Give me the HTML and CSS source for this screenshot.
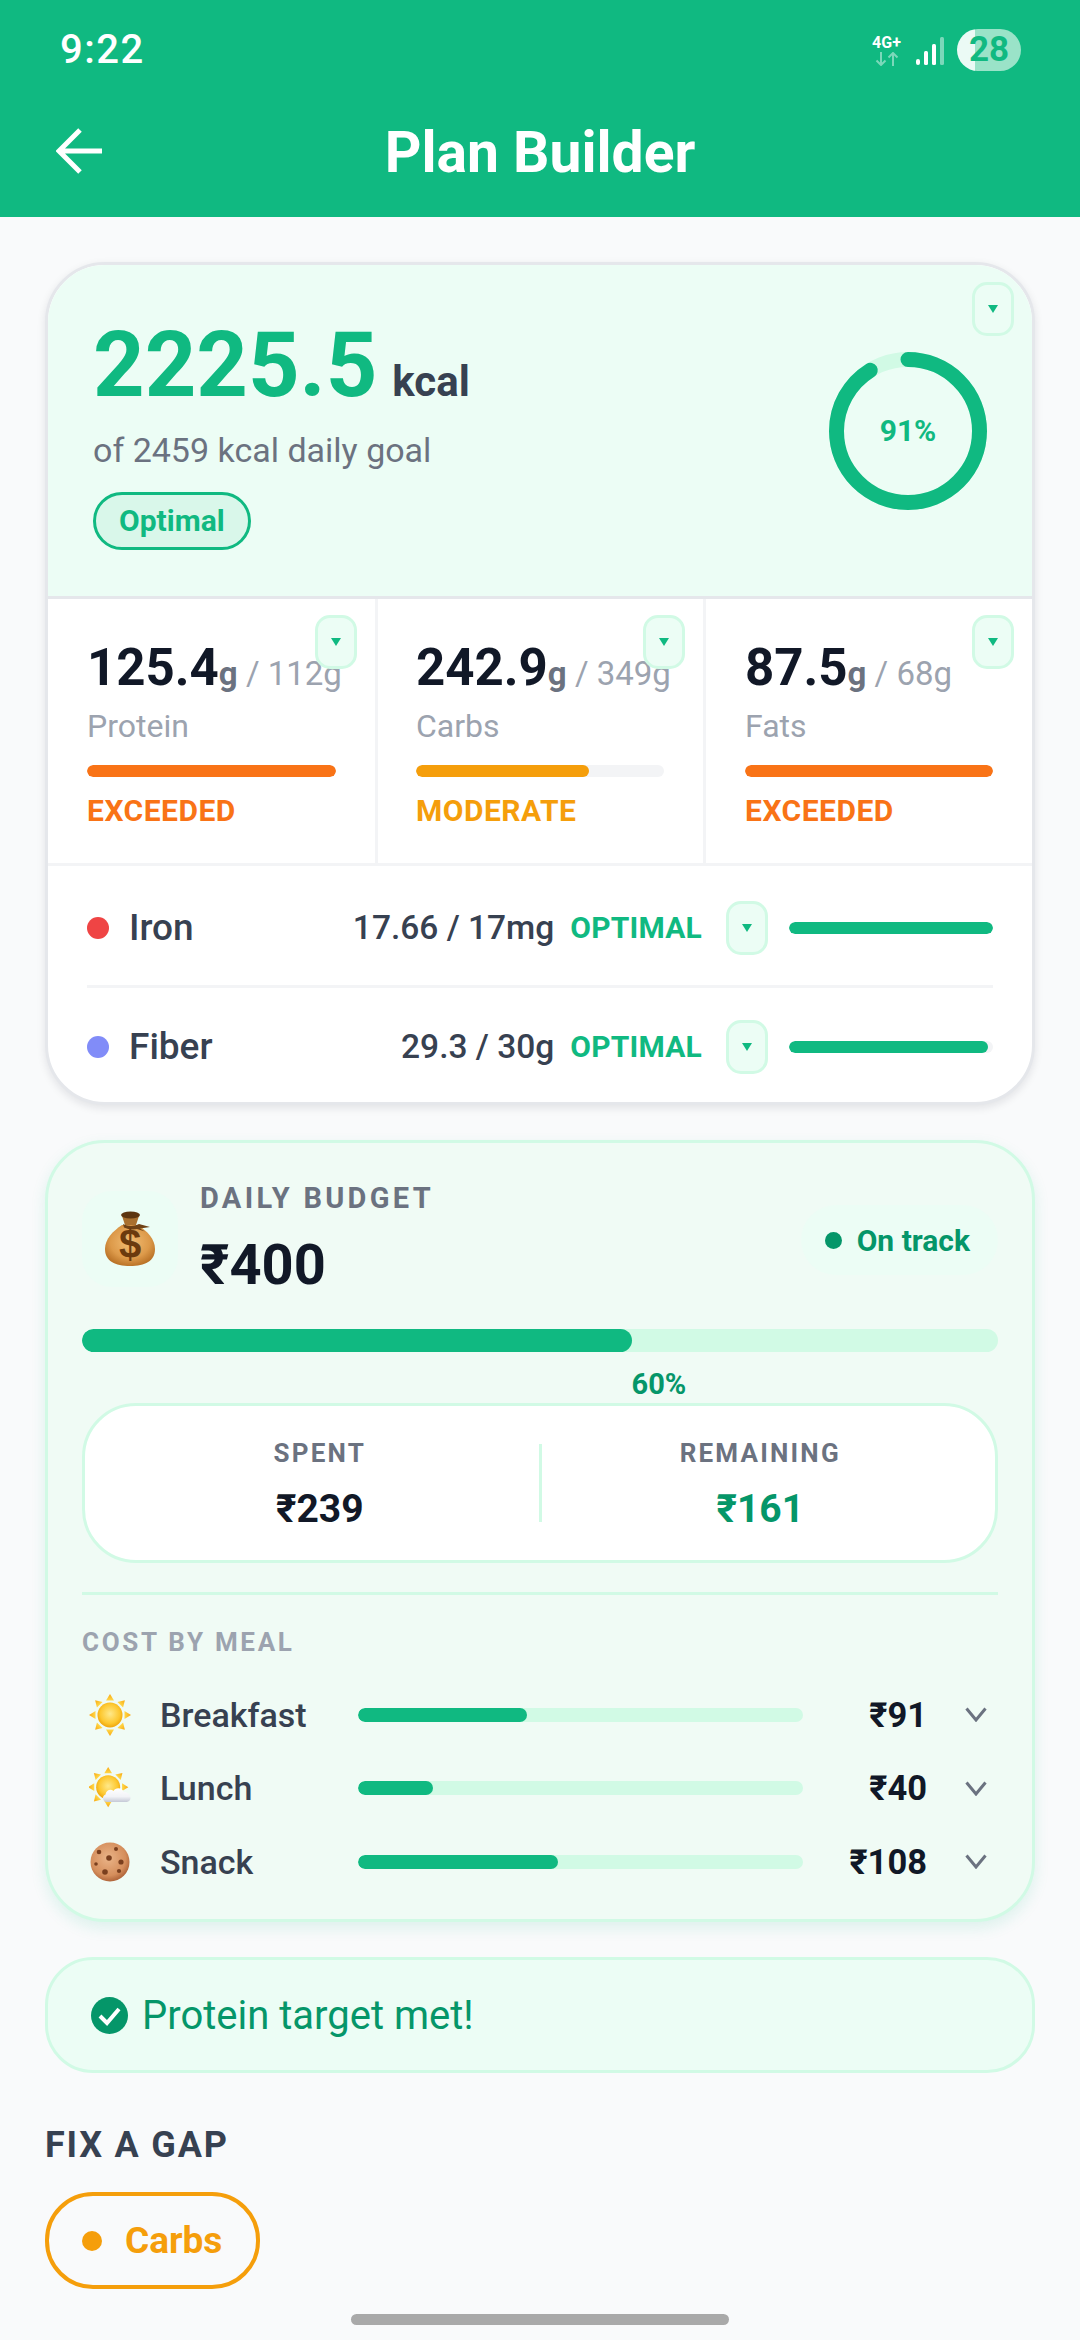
FILE: index.html
```html
<!DOCTYPE html>
<html lang="en">
<head>
<meta charset="utf-8">
<title>Plan Builder</title>
<link rel="stylesheet" href="styles.css">
</head>
<body>
<svg class="defs" width="0" height="0" aria-hidden="true">
  <defs>
    <radialGradient id="sunG" cx="50%" cy="45%" r="55%"><stop offset="0%" stop-color="#ffe98a"/><stop offset="70%" stop-color="#fdc830"/><stop offset="100%" stop-color="#eea50c"/></radialGradient>
    <linearGradient id="rayG" x1="0" y1="0" x2="0" y2="1"><stop offset="0%" stop-color="#f9a80f"/><stop offset="100%" stop-color="#ffd84a"/></linearGradient>
    <radialGradient id="bagG" cx="50%" cy="42%" r="60%"><stop offset="0%" stop-color="#f2bd74"/><stop offset="65%" stop-color="#dd9a4a"/><stop offset="100%" stop-color="#b87025"/></radialGradient>
    <radialGradient id="cookieG" cx="45%" cy="40%" r="60%"><stop offset="0%" stop-color="#eab488"/><stop offset="75%" stop-color="#d58e5c"/><stop offset="100%" stop-color="#b0653a"/></radialGradient>
    <linearGradient id="cloudG" x1="0" y1="0" x2="0" y2="1"><stop offset="0%" stop-color="#ffffff"/><stop offset="60%" stop-color="#f2f3f7"/><stop offset="100%" stop-color="#c5c9d6"/></linearGradient>
    <g id="rays">
      <polygon points="21,0 25,6.5 17,6.5" fill="url(#rayG)"/>
      <polygon points="21,0 25,6.5 17,6.5" fill="url(#rayG)" transform="rotate(45 21 21)"/>
      <polygon points="21,0 25,6.5 17,6.5" fill="url(#rayG)" transform="rotate(90 21 21)"/>
      <polygon points="21,0 25,6.5 17,6.5" fill="url(#rayG)" transform="rotate(135 21 21)"/>
      <polygon points="21,0 25,6.5 17,6.5" fill="url(#rayG)" transform="rotate(180 21 21)"/>
      <polygon points="21,0 25,6.5 17,6.5" fill="url(#rayG)" transform="rotate(225 21 21)"/>
      <polygon points="21,0 25,6.5 17,6.5" fill="url(#rayG)" transform="rotate(270 21 21)"/>
      <polygon points="21,0 25,6.5 17,6.5" fill="url(#rayG)" transform="rotate(315 21 21)"/>
    </g>
    <polygon id="tri" points="0,0 10,0 5,8"/>
    <polyline id="chev" points="1.5,1.5 11,13 20.5,1.5"/>
  </defs>
</svg>

<header class="topbar">
  <div class="status">
    <span class="clock">9:22</span>
    <div class="status-icons">
      <div class="net">
        <span class="net-label">4G+</span>
        <svg class="net-arrows" width="24" height="14" viewBox="0 0 24 14"><path d="M6 0V13M1.5 8.5 6 13l4.5-4.5M18 14V1M13.5 5.5 18 1l4.5 4.5" fill="none" stroke="#fff" stroke-opacity=".45" stroke-width="2"/></svg>
      </div>
      <svg class="signal" width="28" height="29" viewBox="0 0 28 29"><rect x="0" y="22" width="4" height="6" rx="2" fill="#fff"/><rect x="8" y="14" width="4" height="14" rx="1.5" fill="#fff"/><rect x="16" y="7" width="4" height="21" rx="1.5" fill="#fff"/><rect x="24" y="0" width="4" height="28" rx="1.5" fill="#fff" fill-opacity=".45"/></svg>
      <div class="battery">28</div>
    </div>
  </div>
  <div class="titlebar">
    <svg class="back" width="48" height="46" viewBox="0 0 48 46"><path d="M46 23H4M24 2 3 23l21 21" fill="none" stroke="#fff" stroke-width="5"/></svg>
    <h1 class="title">Plan Builder</h1>
  </div>
</header>

<main class="content">
  <section class="nutri-card">
    <div class="hero">
      <div class="hero-left">
        <div class="kcal-line"><span class="kcal-num">2225.5</span><span class="kcal-unit">kcal</span></div>
        <div class="kcal-sub">of 2459 kcal daily goal</div>
        <span class="pill-optimal">Optimal</span>
      </div>
      <div class="ring">
        <svg width="158" height="158" viewBox="0 0 158 158">
          <circle cx="79" cy="79" r="71.5" fill="none" stroke="#d1fae5" stroke-width="15"/>
          <circle class="ring-arc" cx="79" cy="79" r="71.5" fill="none" stroke="#10b981" stroke-width="15" stroke-linecap="round" stroke-dasharray="408.8 449.2" transform="rotate(-90 79 79)"/>
        </svg>
        <span class="ring-label">91%</span>
      </div>
      <button class="drop drop-hero"><svg width="10" height="8"><use href="#tri"/></svg></button>
    </div>

    <div class="macros">
      <div class="macro">
        <button class="drop drop-macro"><svg width="10" height="8"><use href="#tri"/></svg></button>
        <div class="macro-val"><b>125.4</b><i>g</i><span> / 112g</span></div>
        <div class="macro-name">Protein</div>
        <div class="mbar"><div class="mfill orange" style="width:100%"></div></div>
        <div class="mstate t-orange">EXCEEDED</div>
      </div>
      <div class="macro">
        <button class="drop drop-macro"><svg width="10" height="8"><use href="#tri"/></svg></button>
        <div class="macro-val"><b>242.9</b><i>g</i><span> / 349g</span></div>
        <div class="macro-name">Carbs</div>
        <div class="mbar"><div class="mfill amber" style="width:69.6%"></div></div>
        <div class="mstate t-amber">MODERATE</div>
      </div>
      <div class="macro">
        <button class="drop drop-macro"><svg width="10" height="8"><use href="#tri"/></svg></button>
        <div class="macro-val"><b>87.5</b><i>g</i><span> / 68g</span></div>
        <div class="macro-name">Fats</div>
        <div class="mbar"><div class="mfill orange" style="width:100%"></div></div>
        <div class="mstate t-orange">EXCEEDED</div>
      </div>
    </div>

    <div class="micros">
      <div class="micro micro-first">
        <span class="mdot red"></span>
        <span class="micro-name">Iron</span>
        <span class="micro-val">17.66 / 17mg</span>
        <span class="micro-state">OPTIMAL</span>
        <button class="drop"><svg width="10" height="8"><use href="#tri"/></svg></button>
        <div class="micro-bar"><div class="mfill green" style="width:100%"></div></div>
      </div>
      <div class="micro">
        <span class="mdot indigo"></span>
        <span class="micro-name">Fiber</span>
        <span class="micro-val">29.3 / 30g</span>
        <span class="micro-state">OPTIMAL</span>
        <button class="drop"><svg width="10" height="8"><use href="#tri"/></svg></button>
        <div class="micro-bar"><div class="mfill green" style="width:97.7%"></div></div>
      </div>
    </div>
  </section>

  <section class="budget-card">
    <div class="budget-head">
      <div class="bag-box">
        <svg width="50" height="56" viewBox="0 0 50 56">
          <path d="M17 14C8 20 0 28 0 38c0 12 10 17 25 17s25-5 25-17c0-10-8-18-17-24z" fill="url(#bagG)"/>
          <path d="M17 5h17l-3 9H20z" fill="#a9702f"/>
          <ellipse cx="25.500" cy="4" rx="9.500" ry="3.500" fill="#5d3510"/>
          <path d="M18 13c5 2.500 11 2.500 16 0l11 3-10 1.500 5 3-8-2.500c-4 1-9 .5-13-1.500z" fill="#6f4216"/>
          <text class="bag-sign" x="25" y="47" text-anchor="middle">$</text>
        </svg>
      </div>
      <div class="budget-title">
        <div class="budget-label">DAILY BUDGET</div>
        <div class="budget-amt">₹400</div>
      </div>
      <div class="track-pill"><span class="track-dot"></span>On track</div>
    </div>
    <div class="budget-bar"><div class="budget-fill" style="width:60%"></div></div>
    <div class="budget-pct" style="margin-left:60%">60%</div>

    <div class="spend">
      <div class="spend-col">
        <div class="spend-label">SPENT</div>
        <div class="spend-val">₹239</div>
      </div>
      <div class="spend-sep"></div>
      <div class="spend-col">
        <div class="spend-label">REMAINING</div>
        <div class="spend-val spend-left">₹161</div>
      </div>
    </div>

    <div class="budget-rule"></div>
    <div class="meal-head">COST BY MEAL</div>

    <div class="meal">
      <span class="meal-ico"><svg width="42" height="42" viewBox="0 0 42 42"><use href="#rays"/><circle cx="21" cy="21" r="12.500" fill="url(#sunG)"/></svg></span>
      <span class="meal-name">Breakfast</span>
      <div class="meal-bar"><div class="meal-fill" style="width:38%"></div></div>
      <span class="meal-val">₹91</span>
      <svg class="chev" width="22" height="15" viewBox="0 0 22 15"><use href="#chev"/></svg>
    </div>
    <div class="meal">
      <span class="meal-ico"><svg width="42" height="42" viewBox="0 0 42 42"><g transform="translate(-1 0) scale(.96)"><use href="#rays"/><circle cx="21" cy="21" r="12.500" fill="url(#sunG)"/></g><path d="M18 35c-4.500 0-5.500-6-1.500-7.500C17 23 22 21.500 24.500 24c2-4 9-3.500 10 1 3-.5 7 2 7 5.500S39 35 37 35z" fill="url(#cloudG)"/></svg></span>
      <span class="meal-name">Lunch</span>
      <div class="meal-bar"><div class="meal-fill" style="width:16.900%"></div></div>
      <span class="meal-val">₹40</span>
      <svg class="chev" width="22" height="15" viewBox="0 0 22 15"><use href="#chev"/></svg>
    </div>
    <div class="meal">
      <span class="meal-ico"><svg width="42" height="42" viewBox="0 0 42 42"><circle cx="21" cy="21" r="19.500" fill="url(#cookieG)"/><g fill="#7a3f1e"><circle cx="10" cy="11" r="2.300"/><circle cx="27" cy="8" r="2"/><circle cx="20" cy="17" r="2.800"/><circle cx="32" cy="21" r="2.600"/><circle cx="7" cy="23" r="1.800"/><circle cx="16" cy="31" r="2.800"/><circle cx="30" cy="30" r="2.100"/></g></svg></span>
      <span class="meal-name">Snack</span>
      <div class="meal-bar"><div class="meal-fill" style="width:45%"></div></div>
      <span class="meal-val">₹108</span>
      <svg class="chev" width="22" height="15" viewBox="0 0 22 15"><use href="#chev"/></svg>
    </div>
  </section>

  <section class="alert">
    <svg width="37" height="37" viewBox="0 0 37 37"><circle cx="18.500" cy="18.500" r="18.500" fill="#059669"/><path d="M9 19l7 7 12-14" fill="none" stroke="#fff" stroke-width="4"/></svg>
    <span>Protein target met!</span>
  </section>

  <h2 class="gap-title">FIX A GAP</h2>
  <button class="gap-chip"><span class="gap-dot"></span>Carbs</button>
</main>
<div class="home-bar"></div>
</body>
</html>
```

FILE: styles.css
```css
* { box-sizing: border-box; }
html, body { margin: 0; padding: 0; }
body {
  width: 1080px;
  height: 2340px;
  overflow: hidden;
  position: relative;
  background: #f9fafb;
  font-family: "Roboto", "Noto Sans", sans-serif;
  color: #111827;
}
.defs { position: absolute; }
button { font-family: inherit; padding: 0; margin: 0; }

/* top bar */
.topbar { height: 217px; background: #10b981; color: #fff; padding: 0 58px 0 60px; }
.status { height: 100px; display: flex; justify-content: space-between; align-items: center; }
.clock { font-size: 40px; font-weight: 500; line-height: 40px; letter-spacing: 1.500px; }
.status-icons { display: flex; align-items: center; gap: 13px; padding-right: 1px; }
.net { display: flex; flex-direction: column; align-items: center; width: 33px; }
.net-label { font-size: 16px; font-weight: 700; line-height: 15px; margin-bottom: 2px; }
.net-arrows { display: block; }
.signal { display: block; margin-top: 2px; }
.battery {
  width: 64px; height: 42px; border-radius: 21px;
  background: linear-gradient(90deg, #ebfaf5 0 18px, #9ae3c8 18px);
  color: #10b981; font-size: 35px; font-weight: 700; line-height: 42px; text-align: center;
}
.titlebar { display: flex; align-items: center; justify-content: center; height: 106px; position: relative; margin-left: -60px; margin-right: -58px; }
.back { position: absolute; left: 56px; top: 28px; }
.title { margin: 0; font-size: 57px; font-weight: 700; line-height: 60px; }

/* layout */
.content { padding: 45px 45px 0; display: flex; flex-direction: column; align-items: stretch; }

/* nutrition card */
.nutri-card {
  height: 843px;
  background: #fff;
  border: 3px solid #e5e7eb;
  border-radius: 60px;
  overflow: hidden;
  box-shadow: 0 3px 9px rgba(17, 24, 39, .10);
}
.hero {
  height: 334px; position: relative;
  background: #ecfdf5;
  border-bottom: 3px solid #e5e7eb;
  display: flex; justify-content: space-between; align-items: center;
  padding: 0 45px 0 45px;
}
.hero-left { display: flex; flex-direction: column; align-items: flex-start; padding-top: 8px; }
.kcal-line { display: flex; align-items: baseline; height: 88px; line-height: 92px; }
.kcal-num { font-size: 90px; font-weight: 700; color: #10b981; }
.kcal-unit { font-size: 42px; font-weight: 700; color: #374151; margin-left: 15px; }
.kcal-sub { font-size: 34px; line-height: 45px; color: #6b7280; margin-top: 20px; }
.pill-optimal {
  margin-top: 19px; height: 58px; padding: 0 23px;
  border: 3px solid #10b981; border-radius: 29px; background: #d9f7ea;
  color: #10b981; font-size: 30px; font-weight: 700; line-height: 52px;
}
.ring { position: relative; width: 158px; height: 158px; display: flex; align-items: center; justify-content: center; }
.ring svg { position: absolute; inset: 0; }
.ring-label { position: relative; font-size: 30px; font-weight: 700; color: #10b981; }

.drop {
  flex: none; width: 42px; height: 54px;
  border: 3px solid #d1fae5; border-radius: 15px; background: #ecfdf5;
  display: inline-flex; align-items: center; justify-content: center;
}
.drop svg { fill: #10b981; display: block; }
.drop-hero { position: absolute; right: 18px; top: 17px; }
.drop-macro { position: absolute; right: 18px; top: 16px; }

/* macros */
.macros { display: grid; grid-template-columns: 330px 328px 326px; height: 267px; border-bottom: 3px solid #f3f4f6; }
.macro { position: relative; min-width: 0; padding: 39px 39px 0; border-right: 3px solid #f3f4f6; }
.macro:nth-child(2) { padding-left: 38px; }
.macro:last-child { border-right: 0; }
.macro-val { display: flex; align-items: baseline; white-space: pre; line-height: 60px; height: 60px; }
.macro-val b { font-size: 51px; font-weight: 700; color: #111827; }
.macro-val i { font-style: normal; font-size: 33px; font-weight: 700; color: #6b7280; }
.macro-val span { font-size: 33px; font-weight: 400; color: #9ca3af; }
.macro-name { font-size: 32px; line-height: 45px; margin-top: 6px; color: #9ca3af; }
.mbar { height: 12px; margin-top: 16px; background: #f3f4f6; border-radius: 6px; overflow: hidden; }
.mfill { height: 100%; border-radius: 6px; }
.orange { background: #f97316; }
.amber { background: #f59e0b; }
.green { background: #10b981; }
.mstate { font-size: 30px; font-weight: 700; line-height: 36px; margin-top: 16px; letter-spacing: .5px; }
.t-orange { color: #f97316; }
.t-amber { color: #f59e0b; }

/* micros */
.micros { padding: 2px 39px 0; }
.micro { display: flex; align-items: center; height: 117px; }
.micro-first { border-bottom: 3px solid #f3f4f6; height: 120px; padding-top: 2px; }
.mdot { flex: none; width: 22px; height: 22px; border-radius: 50%; margin-right: 20px; }
.red { background: #ef4444; }
.indigo { background: #818cf8; }
.micro-name { flex: 1; font-size: 37px; font-weight: 500; color: #374151; }
.micro-val { font-size: 33.500px; font-weight: 500; color: #374151; margin-right: 16px; }
.micro-state { font-size: 30px; font-weight: 700; color: #10b981; margin-right: 24px; letter-spacing: .2px; }
.micro-bar { flex: none; width: 204px; height: 12px; margin-left: 21px; background: #f3f4f6; border-radius: 6px; overflow: hidden; }

/* budget */
.budget-card {
  margin-top: 35px; height: 782px;
  background: #f0fbf5;
  border: 3px solid #d1fae5; border-radius: 60px;
  padding: 37px 34px 0;
  box-shadow: 0 6px 15px rgba(16, 185, 129, .12);
}
.budget-head { display: flex; align-items: center; height: 118px; }
.bag-box { flex: none; width: 96px; height: 96px; border-radius: 30px; background: #ecfdf5; display: flex; align-items: center; justify-content: center; margin-right: 22px; }
.bag-sign { font-family: "Liberation Sans", sans-serif; font-size: 40px; font-weight: 700; fill: #6b3a0e; }
.budget-title { flex: 1; }
.budget-label { font-size: 29px; font-weight: 700; line-height: 36px; letter-spacing: 3.300px; color: #6b7280; }
.budget-amt { font-size: 56px; font-weight: 700; line-height: 66px; margin-top: 16px; color: #111827; }
.track-pill {
  display: flex; align-items: center; height: 70px; padding: 0 28px 0 24px; margin-bottom: -2px;
  background: #ecfdf5; border-radius: 35px;
  color: #059669; font-size: 30px; font-weight: 700;
}
.track-dot { width: 17px; height: 17px; border-radius: 50%; background: #059669; margin-right: 15px; }
.budget-bar { height: 23px; margin-top: 31px; background: #d1fae5; border-radius: 12px; overflow: hidden; }
.budget-fill { height: 100%; background: #10b981; border-radius: 12px; }
.budget-pct { font-size: 29px; font-weight: 700; line-height: 36px; margin-top: 14px; color: #059669; }
.spend {
  display: flex; align-items: center; height: 160px; margin-top: 1px; padding: 0 16px;
  background: #fff; border: 3px solid #d1fae5; border-radius: 54px;
}
.spend-col { flex: 1; text-align: center; }
.spend-label { font-size: 26px; font-weight: 700; line-height: 36px; letter-spacing: 2.200px; color: #6b7280; padding-top: 2px; }
.spend-val { font-size: 39px; font-weight: 700; line-height: 48px; margin-top: 14px; color: #111827; }
.spend-left { color: #059669; }
.spend-sep { flex: none; width: 3px; height: 78px; background: #d1fae5; }
.budget-rule { height: 3px; background: #d1fae5; margin-top: 29px; }
.meal-head { font-size: 26px; font-weight: 700; line-height: 36px; letter-spacing: 2.700px; margin-top: 29px; margin-bottom: 18px; color: #9ca3af; }
.meal { display: grid; grid-template-columns: 78px 198px 445px 124px 1fr; align-items: center; height: 73.500px; }
.meal-ico { padding-left: 7px; display: flex; }
.meal-name { font-size: 34px; font-weight: 500; color: #374151; }
.meal-bar { height: 14px; background: #d1fae5; border-radius: 7px; overflow: hidden; }
.meal-fill { height: 100%; background: #10b981; border-radius: 7px; }
.meal-val { font-size: 34.500px; font-weight: 700; text-align: right; color: #111827; }
.chev { margin-left: 38px; display: block; }
.chev use { fill: none; stroke: #6b7280; stroke-width: 3px; }

/* alert */
.alert {
  margin-top: 35px; height: 116px;
  display: flex; align-items: center; gap: 14px; padding-left: 43px;
  background: #ecfdf5; border: 3px solid #d1fae5; border-radius: 48px;
  font-size: 40px; font-weight: 400; color: #059669;
}
.gap-title { margin: 48px 0 0; font-size: 36px; font-weight: 700; line-height: 48px; letter-spacing: 1.800px; color: #374151; }
.gap-chip {
  margin-top: 23px; align-self: flex-start; width: 215px; height: 97px;
  display: flex; align-items: center; padding-left: 33px;
  background: transparent; border: 4px solid #f59e0b; border-radius: 48px;
  color: #f59e0b; font-size: 37px; font-weight: 700;
}
.gap-dot { width: 20px; height: 20px; border-radius: 50%; background: #f59e0b; margin-right: 23px; }
.home-bar { position: absolute; left: 351px; top: 2314px; width: 378px; height: 11px; border-radius: 6px; background: #a9a9a9; }
```
